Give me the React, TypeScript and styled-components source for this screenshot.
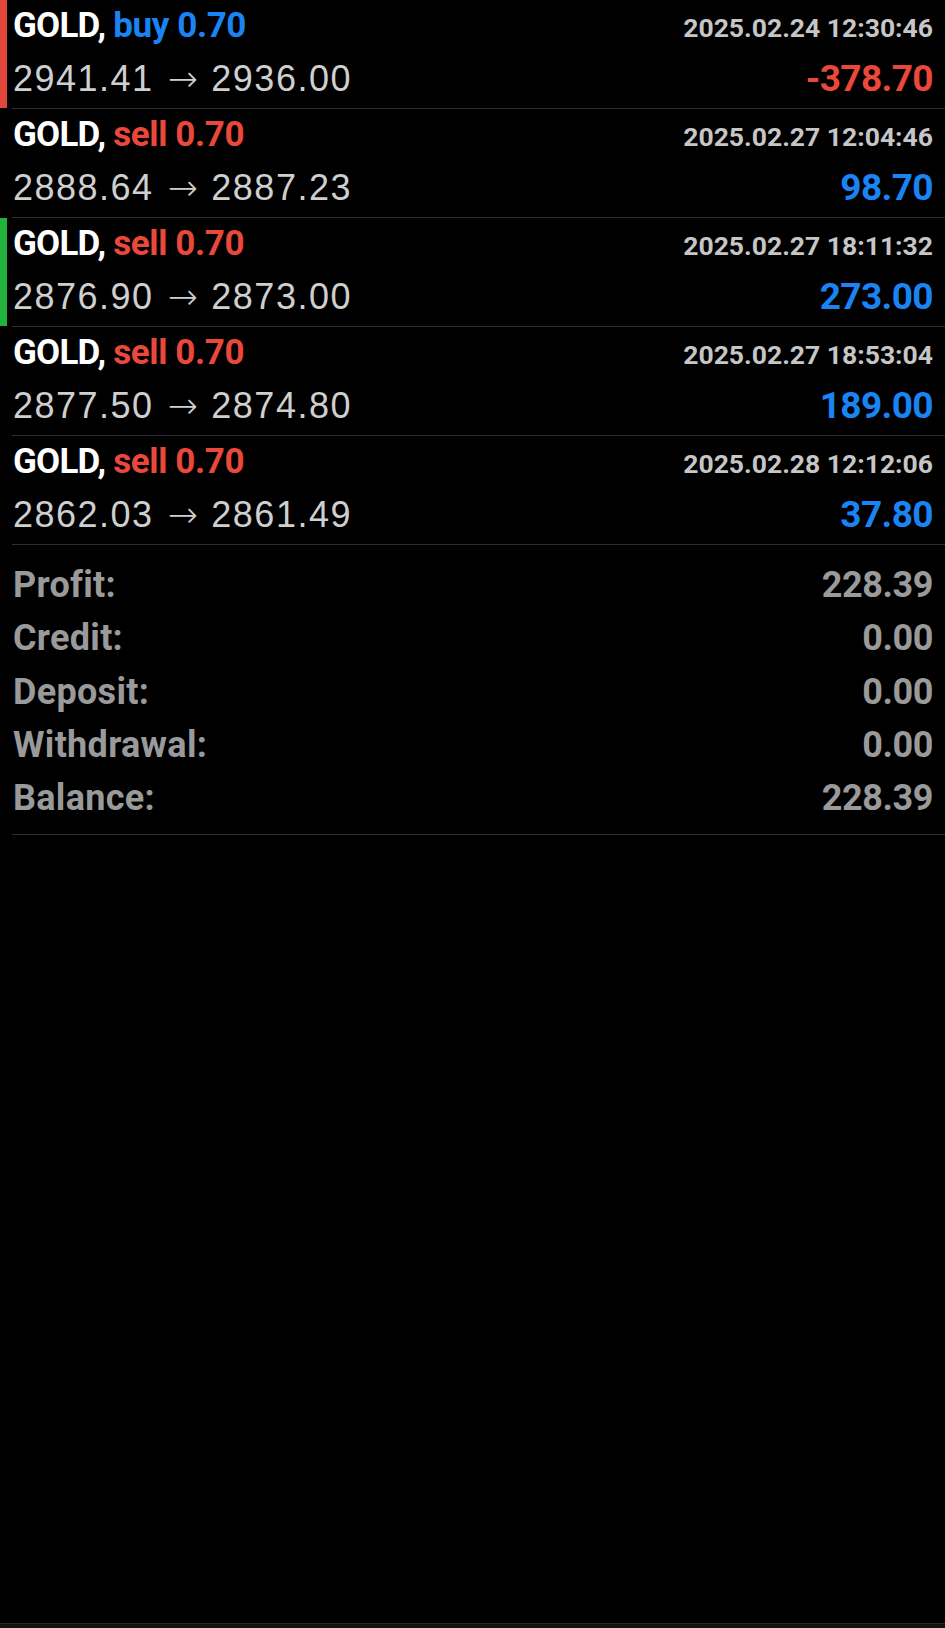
import styled, { createGlobalStyle } from 'styled-components';

const GlobalStyle = createGlobalStyle`
  html, body {
    margin: 0;
    padding: 0;
    background: #000;
  }
  * {
    box-sizing: border-box;
  }
`;

const NEGRITO = `Roboto, "Liberation Sans", sans-serif`;

const Pagina = styled.div`
  display: flex;
  flex-direction: column;
  min-height: 100vh;
  background: #000;
  font-family: "Liberation Sans", Arial, sans-serif;
`;

const Lista = styled.div`
  display: flex;
  flex-direction: column;
  flex: 1;
`;

const Linha = styled.div<{ $marca?: string }>`
  position: relative;
  display: grid;
  grid-template-rows: 52px 54px;
  padding: 0 12px 3px 13px;
  height: 109px;
  &::before {
    content: '';
    position: absolute;
    left: 0;
    top: 0;
    bottom: 1px;
    width: 7px;
    background: ${(p) => p.$marca || 'transparent'};
  }
  &::after {
    content: '';
    position: absolute;
    left: 12px;
    right: 0;
    bottom: 0;
    height: 1px;
    background: #2e2e2e;
  }
`;

const Topo = styled.div`
  display: flex;
  justify-content: space-between;
  align-items: baseline;
  line-height: 52px;
`;

const Simbolo = styled.span`
  font-family: ${NEGRITO};
  font-weight: bold;
  font-size: 35px;
  letter-spacing: -0.8px;
  color: #fff;
`;

const Tipo = styled.span<{ $cor: string }>`
  color: ${(p) => p.$cor};
  letter-spacing: -0.4px;
`;

const Data = styled.span`
  font-family: ${NEGRITO};
  font-weight: bold;
  font-size: 26.5px;
  letter-spacing: 0;
  color: #c6c6c6;
`;

const Baixo = styled.div`
  display: flex;
  justify-content: space-between;
  align-items: baseline;
  line-height: 54px;
`;

const Precos = styled.span`
  font-size: 36px;
  color: #cfcfcf;
  letter-spacing: 1.5px;
`;

const Seta = styled.span`
  font-family: "DejaVu Sans", sans-serif;
  font-weight: 200;
  margin: 0 12px 0 14px;
`;

const Lucro = styled.span<{ $cor: string }>`
  font-family: ${NEGRITO};
  font-weight: bold;
  font-size: 37px;
  letter-spacing: -0.6px;
  color: ${(p) => p.$cor};
`;

const Resumo = styled.div`
  position: relative;
  display: flex;
  flex-direction: column;
  padding: 14px 12px 10px 13px;
  &::after {
    content: '';
    position: absolute;
    left: 12px;
    right: 0;
    bottom: 0;
    height: 1px;
    background: #2e2e2e;
  }
`;

const ItemResumo = styled.div`
  display: flex;
  justify-content: space-between;
  align-items: baseline;
  line-height: 53.3px;
  font-family: ${NEGRITO};
  font-weight: bold;
  font-size: 36px;
  letter-spacing: 0.3px;
  color: #9a9a9a;
`;

const Valor = styled.span`
  letter-spacing: -0.4px;
`;

const Rodape = styled.div`
  height: 5px;
  border-top: 1px solid #2a2a2a;
  background: #121212;
`;

const AZUL = '#1a84f4';
const VERMELHO = '#e9483b';

const negocios = [
  { tipo: 'buy', data: '2025.02.24 12:30:46', de: '2941.41', para: '2936.00', lucro: '-378.70', marca: '#e2463a' },
  { tipo: 'sell', data: '2025.02.27 12:04:46', de: '2888.64', para: '2887.23', lucro: '98.70' },
  { tipo: 'sell', data: '2025.02.27 18:11:32', de: '2876.90', para: '2873.00', lucro: '273.00', marca: '#22b33c' },
  { tipo: 'sell', data: '2025.02.27 18:53:04', de: '2877.50', para: '2874.80', lucro: '189.00' },
  { tipo: 'sell', data: '2025.02.28 12:12:06', de: '2862.03', para: '2861.49', lucro: '37.80' },
];

const resumo = [
  ['Profit:', '228.39'],
  ['Credit:', '0.00'],
  ['Deposit:', '0.00'],
  ['Withdrawal:', '0.00'],
  ['Balance:', '228.39'],
];

const App = () => {
  return (
    <Pagina>
      <GlobalStyle />
      <Lista>
        {negocios.map((n) => (
          <Linha key={n.data} $marca={n.marca}>
            <Topo>
              <Simbolo>
                GOLD, <Tipo $cor={n.tipo === 'buy' ? AZUL : VERMELHO}>{n.tipo} 0.70</Tipo>
              </Simbolo>
              <Data>{n.data}</Data>
            </Topo>
            <Baixo>
              <Precos>
                {n.de}
                <Seta>→</Seta>
                {n.para}
              </Precos>
              <Lucro $cor={n.lucro.startsWith('-') ? VERMELHO : AZUL}>{n.lucro}</Lucro>
            </Baixo>
          </Linha>
        ))}
        <Resumo>
          {resumo.map(([rotulo, valor]) => (
            <ItemResumo key={rotulo}>
              <span>{rotulo}</span>
              <Valor>{valor}</Valor>
            </ItemResumo>
          ))}
        </Resumo>
      </Lista>
      <Rodape />
    </Pagina>
  );
};

export default App;
